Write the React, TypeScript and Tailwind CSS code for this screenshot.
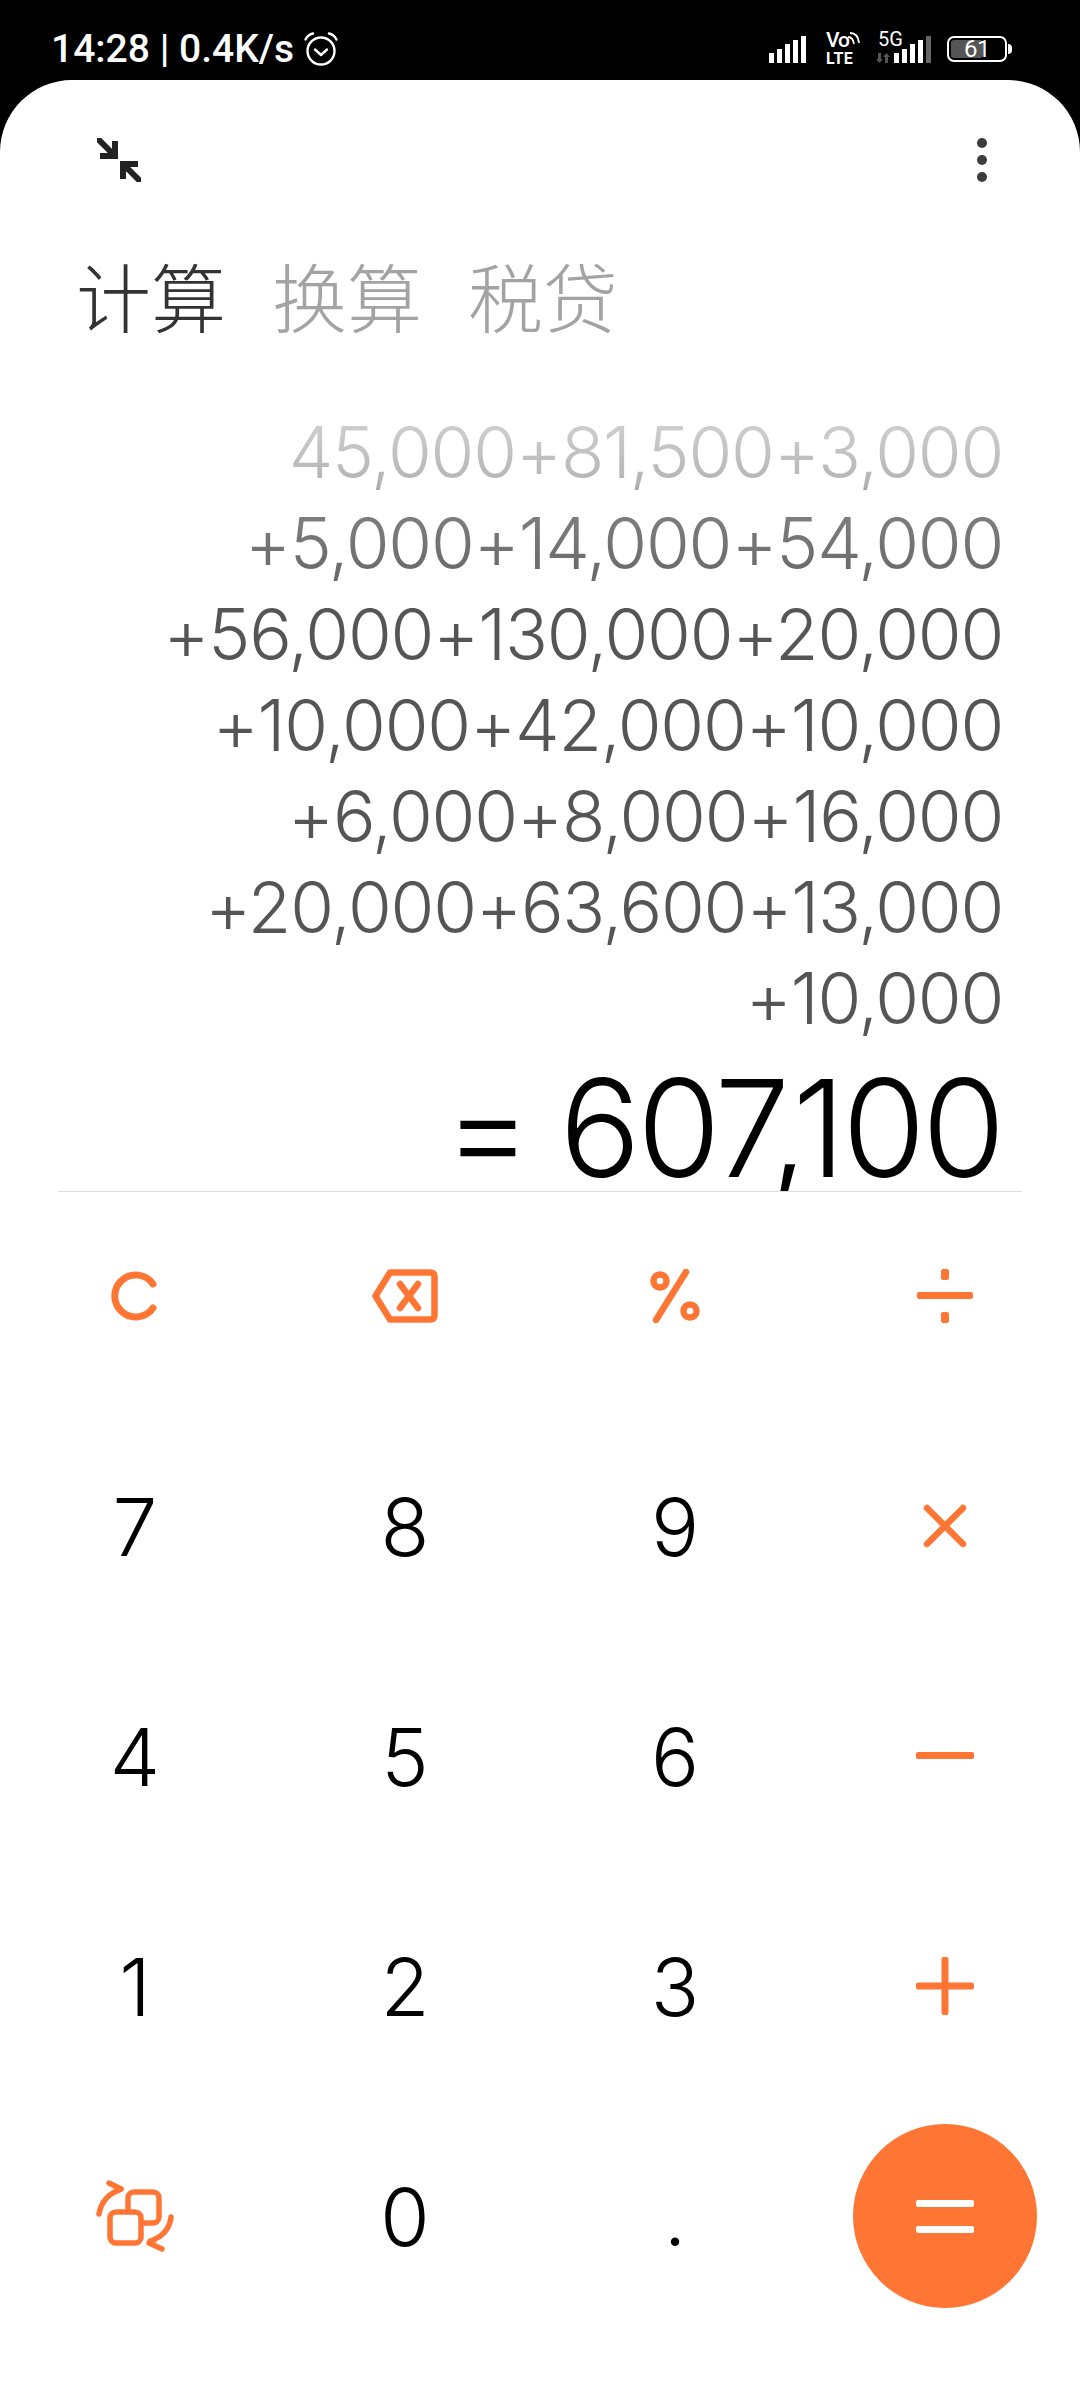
import React from 'react';

const ORANGE = '#ff7534';

const expressionLines = [
  '45,000+81,500+3,000',
  '+5,000+14,000+54,000',
  '+56,000+130,000+20,000',
  '+10,000+42,000+10,000',
  '+6,000+8,000+16,000',
  '+20,000+63,600+13,000',
  '+10,000',
];

function Digit({ value }: { value: string }) {
  return (
    <div className="flex items-center justify-center h-[230px] pt-[2px] text-[80px] font-light text-black leading-none">
      {value}
    </div>
  );
}

function IconCell({ children }: { children: React.ReactNode }) {
  return <div className="flex items-center justify-center h-[230px]">{children}</div>;
}

function CollapseIcon() {
  return (
    <svg width="44" height="44" viewBox="0 0 44 44" fill="none" stroke="#222" strokeWidth="6">
      <path d="M2 2 L17 17" strokeLinecap="round" />
      <path d="M3 18 H18 V3" />
      <path d="M42 42 L27 27" strokeLinecap="round" />
      <path d="M41 26 H26 V41" />
    </svg>
  );
}

function AlarmIcon() {
  return (
    <svg width="36" height="36" viewBox="0 0 36 36" fill="none" stroke="#fff" strokeWidth="2.4">
      <circle cx="18" cy="20" r="13.5" />
      <path d="M12 18.5 L18 24 L24 18.5" strokeLinecap="round" strokeLinejoin="round" />
      <path d="M2.5 8.5 Q5 3.5 10 2.5" strokeLinecap="round" />
      <path d="M33.5 8.5 Q31 3.5 26 2.5" strokeLinecap="round" />
    </svg>
  );
}

function StatusBar() {
  return (
    <div className="flex items-start h-[80px] bg-black pl-[51px] pr-[68px] text-white">
      <span className="mt-[30px] text-[39px] font-medium leading-none font-['Roboto',sans-serif]">14:28 | 0.4K/s</span>
      <span className="ml-[9px] mt-[31px]">
        <AlarmIcon />
      </span>
      <div className="ml-auto flex items-start mt-[31px] h-[33px] font-['Roboto',sans-serif] leading-none">
        {/* first sim */}
        <svg className="mt-[5px]" width="38" height="28" viewBox="0 0 38 28" fill="#fff">
          <rect x="0" y="17" width="5" height="10" />
          <rect x="8" y="13" width="5" height="14" />
          <rect x="16" y="8" width="5" height="19" />
          <rect x="24" y="4" width="5" height="23" />
          <rect x="32" y="0" width="5" height="27" />
        </svg>
        <div className="relative ml-[19px] w-[34px] h-[33px] font-medium">
          <div className="text-[21px] tracking-tighter -mt-[1px]">Vo</div>
          <div className="text-[16px] font-bold tracking-[0.5px] mt-[0px]">LTE</div>
          <svg className="absolute right-0 top-[1px]" width="13" height="14" viewBox="0 0 13 14" fill="none" stroke="#fff" strokeWidth="1.8">
            <path d="M1 5 Q6 5 7 12" />
            <path d="M3 1 Q11 1 12 11" />
          </svg>
        </div>
        {/* second sim */}
        <div className="relative ml-[15px] w-[57px] h-[33px]">
          <span className="absolute left-[3px] top-[-2px] text-[20px]">5G</span>
          <svg className="absolute left-0 top-0" width="57" height="33" viewBox="0 0 57 33" fill="#fff">
            <path d="M3 22 H6 V28 H8 L4.500 32 L1 28 H3 Z" fill="#555" />
            <path d="M10 32 V26 H8 L11.500 22 L15 26 H13 V32 Z" fill="#555" />
            <rect x="19" y="22" width="5" height="10" />
            <rect x="27" y="18" width="5" height="14" />
            <rect x="35" y="13" width="5" height="19" />
            <rect x="43" y="9" width="5" height="23" />
            <rect x="51" y="5" width="5" height="27" fill="#666" />
          </svg>
        </div>
        <div className="relative ml-[15px] mt-[5px] w-[60px] h-[26px] rounded-[7px] border-2 border-white p-[2px]">
          <div className="h-full w-[61%] rounded-[3px] bg-[#555]"></div>
          <span className="absolute inset-0 flex items-center justify-center text-[24px] tracking-[-0.5px]">61</span>
        </div>
        <div className="w-[4px] h-[10px] ml-[1px] mt-[13px] rounded-r-full bg-white"></div>
      </div>
    </div>
  );
}

export default function App() {
  return (
    <div className="w-[1080px] h-[2400px] bg-black overflow-hidden font-['Inter','Noto_Sans_CJK_SC',sans-serif]">
      <StatusBar />
      <div className="h-[2320px] bg-white rounded-t-[72px] flex flex-col">
        {/* top icons */}
        <div className="flex items-center justify-between h-[160px] pl-[97px] pr-[93px]">
          <CollapseIcon />
          <div className="flex flex-col gap-[7px]">
            <span className="block w-[10px] h-[10px] rounded-full bg-[#3c3c3c]"></span>
            <span className="block w-[10px] h-[10px] rounded-full bg-[#3c3c3c]"></span>
            <span className="block w-[10px] h-[10px] rounded-full bg-[#3c3c3c]"></span>
          </div>
        </div>

        {/* tabs */}
        <div className="flex gap-[46px] pl-[76px] h-[108px] items-center text-[75px] font-light leading-none font-['Noto_Sans_CJK_SC',sans-serif]">
          <span className="text-[#333]">计算</span>
          <span className="text-[#a3a3a3]">换算</span>
          <span className="text-[#a3a3a3]">税贷</span>
        </div>

        {/* expression */}
        <div className="mt-[59px] pr-[77px] flex flex-col items-end text-[71px] font-light leading-[91px] tracking-[-1.25px] bg-[linear-gradient(to_bottom,#d6d6d6_0%,#b4b4b4_12%,#828282_15%,#686868_27%,#555_31%,#555_100%)] bg-clip-text text-transparent">
          {expressionLines.map((line, i) => (
            <div key={i}>{line}</div>
          ))}
        </div>

        {/* result */}
        <div className="mt-[22px] pr-[78px] h-[125px] flex items-center justify-end text-[135px] font-light leading-none text-black tracking-[-3.5px] whitespace-pre">
          <span className="mr-[31px]">=</span>
          <span>607,100</span>
        </div>

        <div className="relative mx-[58px] h-[1px] bg-[#dcdcdc]"></div>

        {/* keypad, its white background hides the tail of the comma */}
        <div className="relative bg-white flex-1">
          <div className="grid grid-cols-4 -mt-[11px]">
            <IconCell>
              <svg width="48" height="50" viewBox="0 0 48 50" fill="none" stroke={ORANGE} strokeWidth="7" strokeLinecap="round">
                <path d="M42 13 A21 21 0 1 0 42 37" />
              </svg>
            </IconCell>
            <IconCell>
              <svg width="66" height="54" viewBox="0 0 66 54" fill="none" stroke={ORANGE} strokeWidth="6.5" strokeLinecap="round" strokeLinejoin="round">
                <path d="M18 3.5 H58 Q62.500 3.500 62.500 8 V46 Q62.500 50.500 58 50.500 H18 L3.500 27 Z" />
                <path d="M28 15 L46 39 M46 15 L28 39" />
              </svg>
            </IconCell>
            <IconCell>
              <svg width="50" height="54" viewBox="0 0 50 54" fill="none" stroke={ORANGE} strokeWidth="6.500" strokeLinecap="round">
                <circle cx="10" cy="12" r="6.500" />
                <circle cx="40" cy="42" r="6.500" />
                <path d="M36 3 L6 51" />
              </svg>
            </IconCell>
            <IconCell>
              <svg width="56" height="56" viewBox="0 0 56 56" fill={ORANGE}>
                <rect x="0" y="24" width="56" height="7" rx="2" />
                <rect x="24" y="1" width="8" height="11" rx="2" />
                <rect x="24" y="44" width="8" height="11" rx="2" />
              </svg>
            </IconCell>

            <Digit value="7" />
            <Digit value="8" />
            <Digit value="9" />
            <IconCell>
              <svg width="44" height="44" viewBox="0 0 44 44" fill="none" stroke={ORANGE} strokeWidth="6.500" strokeLinecap="round">
                <path d="M4 4 L40 40 M40 4 L4 40" />
              </svg>
            </IconCell>

            <Digit value="4" />
            <Digit value="5" />
            <Digit value="6" />
            <IconCell>
              <svg width="58" height="8" viewBox="0 0 58 8" fill={ORANGE}>
                <rect width="58" height="7" rx="2" />
              </svg>
            </IconCell>

            <Digit value="1" />
            <Digit value="2" />
            <Digit value="3" />
            <IconCell>
              <svg width="58" height="58" viewBox="0 0 58 58" fill={ORANGE}>
                <rect y="25.500" width="58" height="7" rx="2" />
                <rect x="25.500" width="7" height="58" rx="2" />
              </svg>
            </IconCell>

            <IconCell>
              <svg width="78" height="72" viewBox="0 0 78 72" fill="none" stroke={ORANGE} strokeWidth="5.500" strokeLinecap="round" strokeLinejoin="round">
                <rect x="32" y="12" width="31" height="31" rx="6" />
                <rect x="14" y="32" width="31" height="31" rx="6" fill="#fff" />
                <path d="M3 34 Q6 16 25 9" />
                <path d="M13 3 L25 9 L21 11" />
                <path d="M75 37 Q73 55 54 61" />
                <path d="M66 69 L53 63 L58 60" />
              </svg>
            </IconCell>
            <Digit value="0" />
            <Digit value="." />
            <div className="flex items-center justify-center h-[230px]">
              <div className="w-[184px] h-[184px] rounded-full flex flex-col items-center justify-center gap-[19px] bg-[#ff7534]">
                <span className="block w-[58px] h-[7px] bg-white rounded-[2px]"></span>
                <span className="block w-[58px] h-[7px] bg-white rounded-[2px]"></span>
              </div>
            </div>
          </div>
        </div>
      </div>
    </div>
  );
}
